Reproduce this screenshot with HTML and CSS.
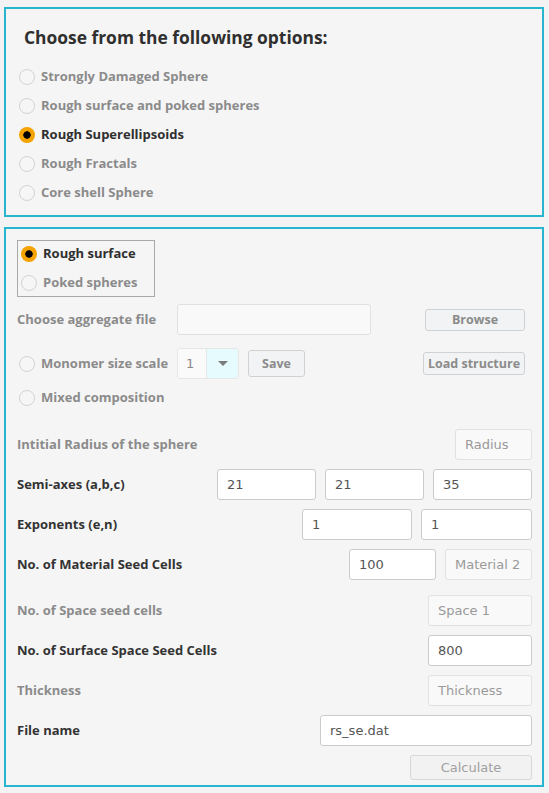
FILE: index.html
```html
<!DOCTYPE html>
<html>
<head>
<meta charset="utf-8">
<link rel="stylesheet" href="styles.css">
</head>
<body>
<section class="panel panel-top">
  <h2 class="title">Choose from the following options:</h2>
  <ul class="options">
    <li class="opt off"><span class="radio"></span>Strongly Damaged Sphere</li>
    <li class="opt off"><span class="radio"></span>Rough surface and poked spheres</li>
    <li class="opt on"><span class="radio checked"></span>Rough Superellipsoids</li>
    <li class="opt off"><span class="radio"></span>Rough Fractals</li>
    <li class="opt off"><span class="radio"></span>Core shell Sphere</li>
  </ul>
</section>

<section class="panel panel-form">
  <div class="groupbox">
    <div class="gopt on"><span class="radio checked"></span>Rough surface</div>
    <div class="gopt off"><span class="radio"></span>Poked spheres</div>
  </div>

  <div class="line line-file">
    <span class="lbl off wlbl">Choose aggregate file</span>
    <span class="field faint w-file"></span>
    <span class="grow"></span>
    <span class="btn btn-browse">Browse</span>
  </div>

  <div class="line line-mono">
    <span class="wlbl opt off"><span class="radio"></span>Monomer size scale</span>
    <span class="select"><span class="sel-val">1</span><span class="sel-arrow"><span class="tri"></span></span></span>
    <span class="btn btn-save">Save</span>
    <span class="grow"></span>
    <span class="btn btn-load">Load structure</span>
  </div>

  <div class="line line-mixed">
    <span class="opt off"><span class="radio"></span>Mixed composition</span>
  </div>

  <div class="row r-radius">
    <span class="lbl off">Intitial Radius of the sphere</span>
    <span class="fields"><span class="field faint ph w77">Radius</span></span>
  </div>
  <div class="row">
    <span class="lbl">Semi-axes (a,b,c)</span>
    <span class="fields"><span class="field w99">21</span><span class="field w99">21</span><span class="field w99">35</span></span>
  </div>
  <div class="row">
    <span class="lbl">Exponents (e,n)</span>
    <span class="fields"><span class="field w110">1</span><span class="field w111">1</span></span>
  </div>
  <div class="row">
    <span class="lbl">No. of Material Seed Cells</span>
    <span class="fields"><span class="field w87">100</span><span class="field faint ph w87">Material 2</span></span>
  </div>
  <div class="row r-space">
    <span class="lbl off">No. of Space seed cells</span>
    <span class="fields"><span class="field faint ph w104">Space 1</span></span>
  </div>
  <div class="row">
    <span class="lbl">No. of Surface Space Seed Cells</span>
    <span class="fields"><span class="field w104">800</span></span>
  </div>
  <div class="row">
    <span class="lbl off">Thickness</span>
    <span class="fields"><span class="field faint ph w104">Thickness</span></span>
  </div>
  <div class="row">
    <span class="lbl">File name</span>
    <span class="fields"><span class="field w212">rs_se.dat</span></span>
  </div>
  <div class="row r-calc">
    <span class="btn btn-calc">Calculate</span>
  </div>
</section>
</body>
</html>
```

FILE: styles.css
```css
* { box-sizing: border-box; }
html, body { margin: 0; padding: 0; }
body {
  background: #f3f3f3;
  padding: 7px 5px 0 4px;
  font-family: "Open Sans", "DejaVu Sans", sans-serif;
  font-weight: 700;
  font-size: 13px;
  color: #333;
}
.panel {
  border: 2px solid #27b5cf;
  background: #f5f5f5;
  width: 540px;
}
.panel-top { padding: 16px 13px 8px 13px; }
.title {
  margin: 0 0 0 5px;
  font-size: 17.4px;
  line-height: 24px;
  font-weight: 700;
  color: #2f2f2f;
}
.options { list-style: none; margin: 13px 0 0 0; padding: 0; }
.opt { display: flex; align-items: center; height: 29px; white-space: nowrap; padding-bottom: 2px; }
.opt .radio, .gopt .radio { margin-top: 2px; }
.off { color: #8b8b8b; }
.on { color: #2f2f2f; }
.radio {
  display: inline-block;
  width: 16px; height: 16px;
  border-radius: 50%;
  border: 1px solid #d3d3d3;
  background: #f6f6f6;
  margin-right: 6px;
  flex: none;
}
.radio.checked {
  border: none;
  background: radial-gradient(circle, #000 0 3.4px, #f5a300 4px);
}
.panel-form { margin-top: 10px; padding: 11px 10px 5px 11px; height: 560px; }
.groupbox {
  width: 138px;
  border: 1px solid #a9a9a9;
  padding: 0 3px;
}
.gopt { display: flex; align-items: center; height: 26px; padding-bottom: 2px; }
.gopt + .gopt { margin-top: 3px; }
.gopt .radio { margin-right: 6px; }
.line { display: flex; align-items: center; }
.wlbl { width: 160px; }
.grow { flex: 1; }
.lbl { padding-bottom: 2px; }
.line-file { margin-top: 7px; height: 31px; }
.line-mono { margin-top: 13px; height: 31px; }
.line-mono .opt { padding-left: 2px; }
.line-mixed { margin-top: 9px; height: 20px; }
.line-mixed .opt { padding-left: 2px; }
.field {
  display: flex;
  align-items: center;
  height: 31px;
  padding: 0 9px;
  background: #fff;
  border: 1px solid #c9cbcd;
  border-radius: 3px;
  font-family: "DejaVu Sans", sans-serif;
  font-weight: 400;
  font-size: 13px;
  color: #555;
}
.field.faint { background: #f9f9f9; border-color: #e1e1e1; }
.field.ph { color: #999; }
.w-file { width: 194px; }
.w77 { width: 77px; }
.w87 { width: 87px; }
.w99 { width: 99px; }
.w104 { width: 104px; }
.w110 { width: 110px; }
.w111 { width: 111px; }
.w212 { width: 212px; }
.btn {
  display: flex;
  align-items: center;
  justify-content: center;
  background: #f2f3f4;
  border: 1px solid #cfd2d5;
  border-radius: 3px;
  color: #8b8b8b;
  font-size: 12.5px;
  padding-bottom: 1px;
}
.btn-browse { width: 100px; height: 22px; margin-right: 7px; }
.btn-save { width: 57px; height: 27px; margin-left: 9px; }
.btn-load { width: 102px; height: 23px; margin-right: 7px; }
.select {
  display: flex;
  width: 62px;
  height: 31px;
  border: 1px solid #e6e6e6;
  border-radius: 3px;
  overflow: hidden;
}
.sel-val {
  width: 29px;
  display: flex; align-items: center;
  padding-left: 8px;
  background: #fafafa;
  border-right: 1px solid #e6e6e6;
  font-family: "DejaVu Sans", sans-serif;
  font-weight: 400;
  color: #888;
}
.sel-arrow {
  flex: 1;
  display: flex; align-items: center; justify-content: center;
  background: #e6fbfd;
}
.tri {
  width: 0; height: 0;
  border-left: 5px solid transparent;
  border-right: 5px solid transparent;
  border-top: 5px solid #7b7b7b;
}
.row {
  display: flex;
  align-items: center;
  height: 31px;
  margin-top: 9px;
}
.row .lbl { flex: 1; white-space: nowrap; }
.fields { display: flex; gap: 9px; }
.r-radius { margin-top: 21px; }
.r-space { margin-top: 15px; }
.r-calc { justify-content: flex-end; height: 25px; }
.btn-calc {
  width: 122px; height: 25px;
  font-family: "DejaVu Sans", sans-serif;
  font-weight: 400;
  font-size: 13px;
  color: #a0a0a0;
  background: #f2f2f2;
  border-color: #d8d8d8;
  padding-bottom: 0;
}
```
